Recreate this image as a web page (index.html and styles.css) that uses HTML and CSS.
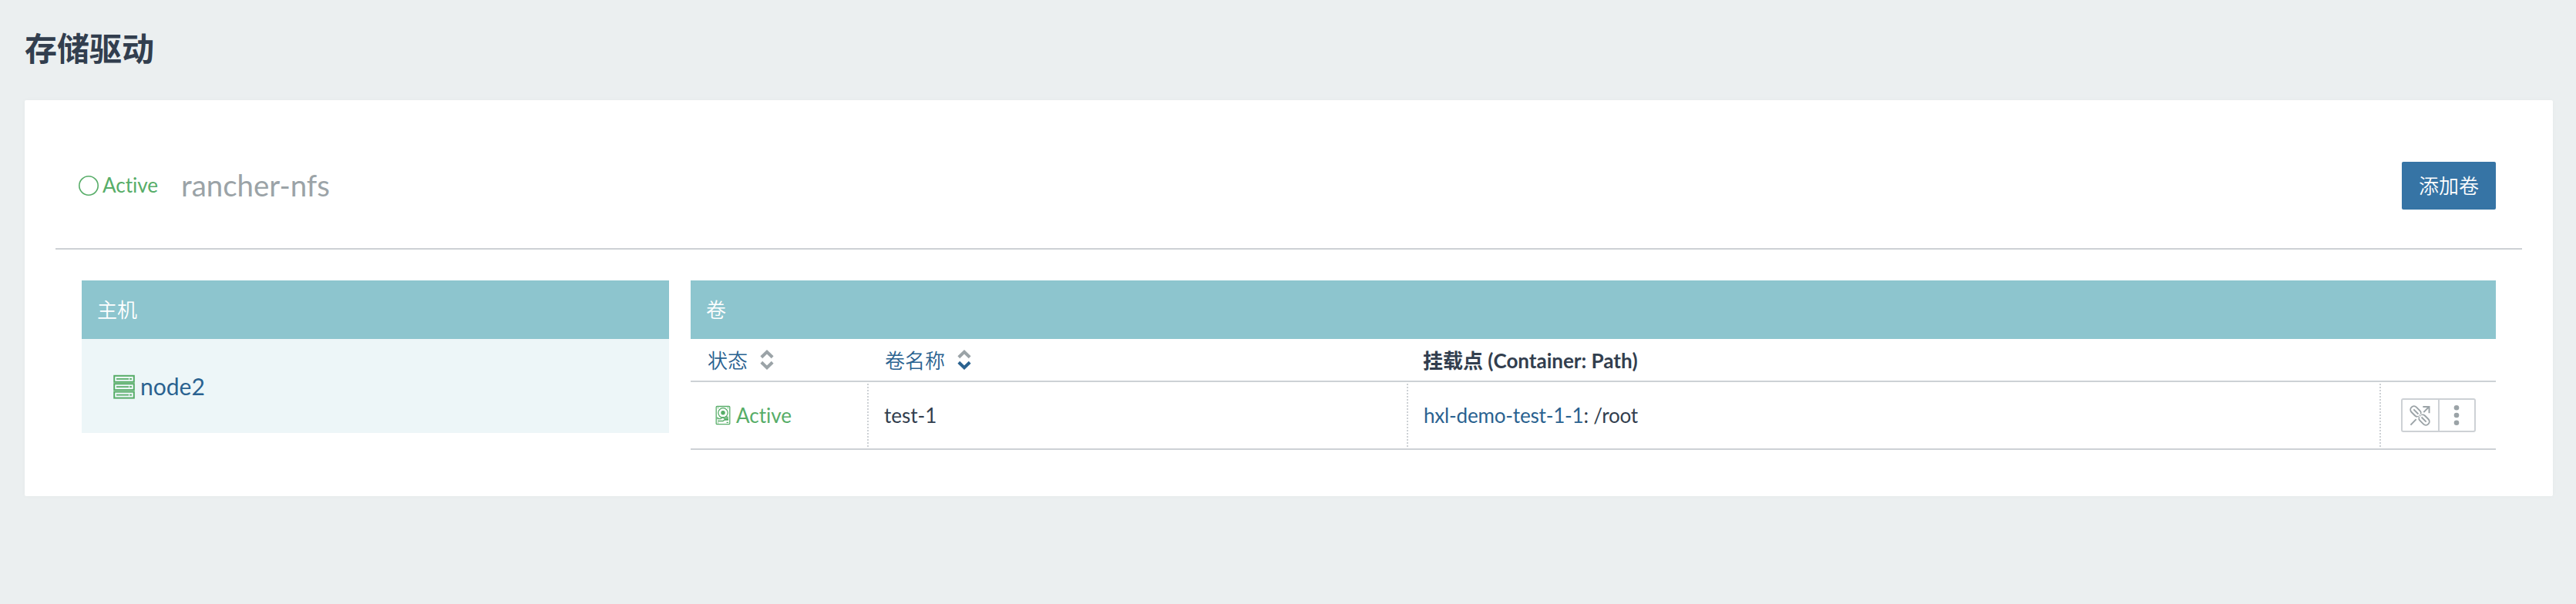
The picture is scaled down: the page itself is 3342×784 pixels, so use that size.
FILE: index.html
```html
<!DOCTYPE html>
<html lang="zh-CN">
<head>
<meta charset="utf-8">
<title>存储驱动</title>
<link rel="stylesheet" href="styles.css">
</head>
<body>
<header class="page-header"><h1>存储驱动</h1></header>
<main class="card">
  <div class="driver">
    <span class="driver-state"><svg class="icon-circle" viewBox="0 0 26 26"><circle cx="13" cy="13" r="12.2"/></svg><span>Active</span></span>
    <h2 class="driver-name">rancher-nfs</h2>
    <button class="btn-primary">添加卷</button>
  </div>
  <div class="columns">
    <section class="hosts">
      <div class="section-head">主机</div>
      <div class="host">
        <svg class="icon-host" viewBox="0 0 28 32"><g fill="none" stroke-width="2"><rect x="1.2" y="1.8" width="25.6" height="8"/><rect x="1.2" y="12.2" width="25.6" height="8"/><rect x="1.2" y="22.6" width="25.6" height="8"/></g><path stroke-width="1.7" d="M4 5.8h16M21 5.8h3M4 16.2h16M21 16.2h3M4 26.6h16M21 26.6h3"/></svg>
        <a class="host-name">node2</a>
      </div>
    </section>
    <section class="volumes">
      <div class="section-head">卷</div>
      <div class="row row-head">
        <div class="cell cell-sort">状态<svg class="icon-sort" viewBox="0 0 18 26"><path d="M1.8 9.8 9 2.8l7.2 7"/><path d="M1.8 16.2 9 23.2l7.2-7"/></svg></div>
        <div class="cell cell-sort">卷名称<svg class="icon-sort" viewBox="0 0 18 26"><path d="M1.8 9.8 9 2.8l7.2 7"/><path class="sorted" d="M1.8 16.2 9 23.2l7.2-7"/></svg></div>
        <div class="cell cell-bold">挂载点 (Container: Path)</div>
        <div class="cell"></div>
      </div>
      <div class="row row-body">
        <div class="cell cell-state"><svg class="icon-disk" viewBox="0 0 20 26"><rect x="1.2" y="1.5" width="17.6" height="23.2" rx="1"/><circle cx="10" cy="9.8" r="6.2"/><circle class="hub" cx="10" cy="9.8" r="2.1"/><path d="M3 3.5h1M16 3.5h1M3 15.2v2.3h4l3-2 2 2h5M3 20.5h7l2-1.5h5M3 22.8h1M14.5 22.3H17M13 15.5h4"/></svg><span>Active</span></div>
        <div class="cell">test-1</div>
        <div class="cell cell-mount"><a class="mount">hxl-demo-test-1-1</a>: /root</div>
        <div class="cell cell-actions">
          <div class="actions">
            <button class="action"><svg class="icon-link" viewBox="0 0 28 28"><g transform="rotate(45 14 14)"><rect x="-2" y="9.3" width="16" height="9.4" rx="4.7"/><rect x="14" y="9.3" width="16" height="9.4" rx="4.7"/><path d="M2 14h9M17 14h9"/><path class="break" d="M14 9v10"/></g><path d="M1.5 26.500l7.500-7.700M19 9.500l7-7.200M18 2H26.500v8.500"/></svg></button>
            <button class="action"><svg class="icon-dots" viewBox="0 0 8 28"><circle cx="4" cy="4.300" r="3.300"/><circle cx="4" cy="14" r="3.300"/><circle cx="4" cy="23.700" r="3.300"/></svg></button>
          </div>
        </div>
      </div>
    </section>
  </div>
</main>
</body>
</html>
```

FILE: styles.css
```css
* { box-sizing: border-box; }
body {
  margin: 0;
  padding: 0 30px 0 32px;
  min-height: 784px;
  background: #ebeff0;
  color: #323e4e;
  font: 26px/38px Lato, "Noto Sans CJK SC DemiLight", "Noto Sans CJK SC", sans-serif;
  font-variant-ligatures: none;
}
svg { display: block; flex: none; overflow: visible; fill: none; }
.page-header { height: 130px; padding-top: 33px; }
.page-header h1 { margin: 0; font-family: Lato, "Noto Sans CJK SC", sans-serif; font-size: 42px; line-height: 60px; font-weight: 700; }
.card { height: 514px; padding: 0 40px; background: #fff; border-radius: 2px; box-shadow: 0 0 6px rgba(0, 0, 0, .03); }
.driver { display: flex; align-items: center; height: 194px; padding: 30px 34px 0 30px; border-bottom: 2px solid #cdd1d5; }
.driver-state { display: flex; align-items: center; gap: 5px; color: #57ad68; }
.driver-state span { position: relative; top: -1px; }
.icon-circle { width: 26px; height: 26px; stroke: #57ad68; stroke-width: 1.6; }
.driver-name { margin: -2px 0 0 30px; font-size: 38.4px; font-weight: 400; color: #9ba3a7; }
.btn-primary { margin-left: auto; width: 122px; height: 62px; padding: 0; border: 0; border-radius: 2px; background: #3674a5; color: #fff; font: inherit; }
.columns { display: grid; grid-template-columns: 762px 2342px; gap: 28px; align-items: start; padding: 40px 34px 0; }
.section-head { height: 76px; padding-left: 20px; line-height: 76px; background: #8dc5ce; color: #fff; }
.host { display: flex; align-items: center; height: 122px; padding-left: 41px; background: #edf6f8; }
.icon-host { width: 28px; height: 32px; margin-top: 2px; stroke: #57ad68; }
.host-name { margin-left: 7px; font-size: 30px; color: #2a6290; }
.row { display: grid; grid-template-columns: 231px 700px 1262px 149px; border-bottom: 2px solid #cdd1d5; }
.row-head { height: 56px; padding-top: 2px; }
.row-body { height: 88px; padding: 2px 0; }
.cell { display: flex; align-items: center; padding-left: 20px; white-space: pre; }
.row-body .cell:not(:last-child) { border-right: 2px dotted #cdd1d5; }
.cell-sort { padding-left: 22px; color: #2a6290; }
.cell-sort + .cell-sort { padding-left: 21px; }
.cell-bold { padding-left: 19px; font-family: Lato, "Noto Sans CJK SC", sans-serif; font-weight: 700; }
.icon-sort { width: 18px; height: 26px; margin: -2px 0 0 16px; stroke: #9ba3a7; stroke-width: 4; }
.sorted { stroke: #2a6290; }
.cell-state { padding-left: 32px; gap: 7px; color: #57ad68; }
.icon-disk { width: 20px; height: 26px; stroke: #57ad68; stroke-width: 1.3; }
.hub { fill: #57ad68; }
.cell-mount { letter-spacing: -.17px; }
.mount { color: #2a6290; }
.row-body .cell-actions { padding-left: 26px; }
.actions { display: flex; width: 97px; height: 44px; border: 2px solid #cdd1d5; border-radius: 3px; }
.action { display: flex; flex: 1; align-items: center; justify-content: center; padding: 0; border: 0; background: none; }
.action + .action { border-left: 2px solid #cdd1d5; }
.icon-link { width: 27px; height: 27px; stroke: #9ba3a7; stroke-width: 2; }
.break { stroke: #fff; stroke-dasharray: 1.5 1.2; }
.icon-dots { width: 8px; height: 28px; fill: #9ba3a7; }
```
